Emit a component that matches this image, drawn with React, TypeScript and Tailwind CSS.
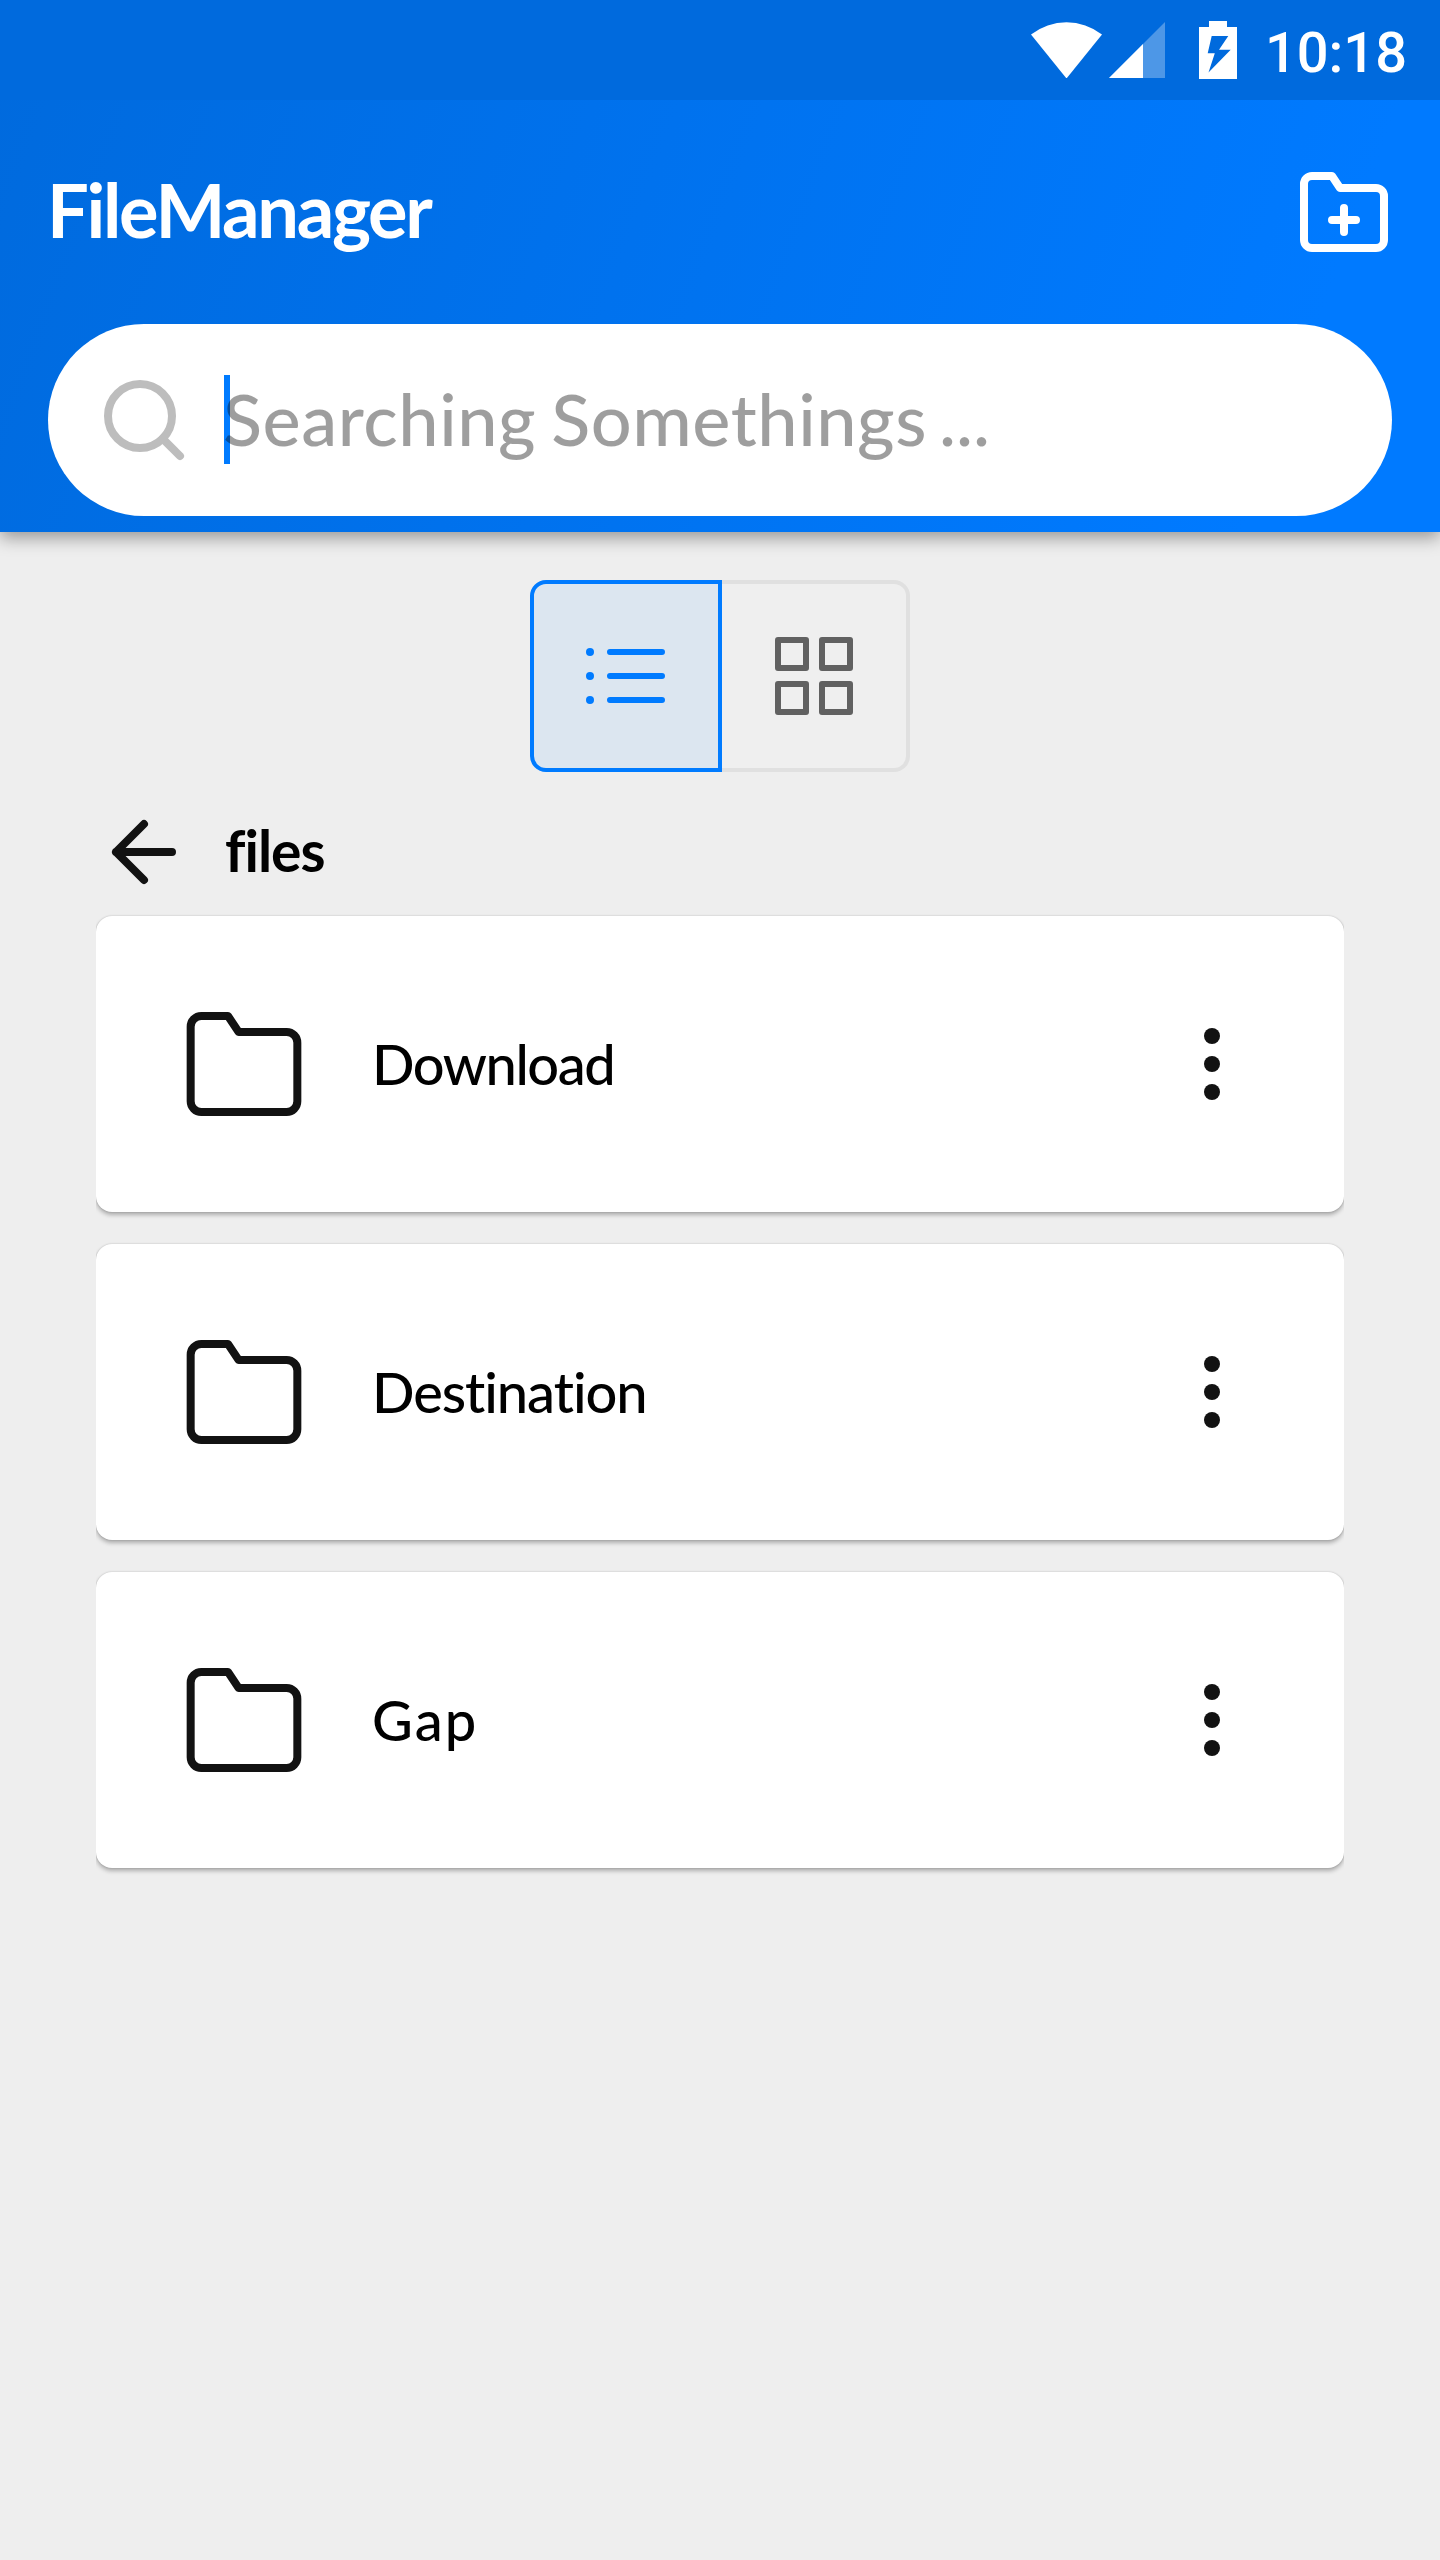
import type { ReactNode } from "react";

function Icon({ className, stroke = 2, children }: { className: string; stroke?: number; children: ReactNode }) {
  return (
    <svg
      viewBox="0 0 24 24"
      className={`shrink-0 ${className}`}
      fill="none"
      stroke="currentColor"
      strokeWidth={stroke}
      strokeLinecap="round"
      strokeLinejoin="round"
    >
      {children}
    </svg>
  );
}

const folderPath = "M22 19a2 2 0 0 1-2 2H4a2 2 0 0 1-2-2V5a2 2 0 0 1 2-2h5l2 3h9a2 2 0 0 1 2 2z";

function StatusBar() {
  return (
    <div className="flex h-[100px] items-start justify-end bg-[#006add] pr-[33px] text-white">
      <svg className="mt-[22px] h-14 w-[71px]" viewBox="0 0 71 56" fill="currentColor">
        <path d="M0 12.5A58 58 0 0 1 71 12.5L35.5 56.5z" />
      </svg>
      <svg className="mt-[22px] ml-[7px] h-14 w-14" viewBox="0 0 56 56" fill="currentColor">
        <path d="M56 0V56H0z" opacity="0.3" />
        <path d="M34 22V56H0z" />
      </svg>
      <svg className="mt-[21px] ml-[34px] h-[58px] w-[38px]" viewBox="0 0 38 58" fill="currentColor">
        <path
          fillRule="evenodd"
          d="M10 0H28V6H38V58H0V6H10zM12.7 15L8.7 32.3H15.8L9.5 51.5L31.7 28.7H20L29.3 15z"
        />
      </svg>
      <span className="mt-[3px] ml-7 font-[Roboto,sans-serif] text-[56px] leading-[100px] font-medium">10:18</span>
    </div>
  );
}

function Header() {
  return (
    <header className="relative h-[532px] bg-[linear-gradient(110deg,#006add_0%,#007aff_88%)] shadow-[0_6px_16px_rgba(0,0,0,0.36)]">
      <StatusBar />
      <div className="flex h-56 items-center justify-between pr-12 pl-[47px]">
        <h1 className="pb-[5px] text-[74px] leading-none font-bold tracking-[-2.3px] text-white">FileManager</h1>
        <Icon className="size-24 text-white">
          <path d={folderPath} />
          <path d="M12 11v6M9 14h6" />
        </Icon>
      </div>
      <div className="mx-12 flex h-48 items-center rounded-[96px] bg-white pl-12">
        <Icon className="size-24 text-[#bdbdbd]">
          <circle cx="11" cy="11" r="8" />
          <path d="M21 21l-4.35-4.35" />
        </Icon>
        <div className="mb-px ml-8 h-[89px] w-1.5 shrink-0 bg-[#007bff]" />
        <span className="-ml-[7px] pb-[5px] text-[72px] leading-none font-medium tracking-[0.55px] whitespace-nowrap text-black/38 [word-spacing:-3.7px]">
          Searching Somethings <span className="-ml-[3px] tracking-[0px]">...</span>
        </span>
      </div>
    </header>
  );
}

function ViewToggle() {
  return (
    <div className="mt-12 flex justify-center">
      <button className="flex size-48 items-center justify-center rounded-l-2xl border-4 border-[#007bff] bg-[#dce6f0] text-[#007bff]">
        <svg className="h-14 w-20" viewBox="0 0 80 56" fill="currentColor">
          <circle cx="4" cy="4" r="4" />
          <circle cx="4" cy="28" r="4" />
          <circle cx="4" cy="52" r="4" />
          <path d="M24 4H76M24 28H76M24 52H76" stroke="currentColor" strokeWidth="6" strokeLinecap="round" />
        </svg>
      </button>
      <button className="flex h-48 w-[188px] items-center justify-center rounded-r-2xl border-4 border-l-0 border-[#e0e0e0] bg-[#efefef] text-[#616161]">
        <svg
          className="size-[78px]"
          viewBox="0 0 78 78"
          fill="none"
          stroke="currentColor"
          strokeWidth="6"
          strokeLinejoin="round"
        >
          <path d="M3 3h28v28H3zM47 3h28v28H47zM3 47h28v28H3zM47 47h28v28H47z" />
        </svg>
      </button>
    </div>
  );
}

function FileCard({ name, tracking }: { name: string; tracking: string }) {
  return (
    <li className="[clip-path:inset(-12px_0)]">
      <div className="flex h-74 items-center rounded-2xl bg-white px-[84px] shadow-[0_3px_4px_rgba(0,0,0,0.27),0_0_2px_rgba(0,0,0,0.2)]">
        <Icon className="size-32 text-[#121212]" stroke={1.5}>
          <path d={folderPath} />
        </Icon>
        <span className={`ml-16 grow pb-px text-[56px] leading-none font-medium text-black ${tracking}`}>{name}</span>
        <svg className="size-24" viewBox="0 0 96 96" fill="#121212">
          <circle cx="48" cy="20" r="8" />
          <circle cx="48" cy="48" r="8" />
          <circle cx="48" cy="76" r="8" />
        </svg>
      </div>
    </li>
  );
}

export default function App() {
  return (
    <div className="h-[2560px] w-[1440px] overflow-hidden bg-[#eeeeee] font-[Lato,sans-serif]">
      <Header />
      <ViewToggle />
      <div className="mx-24 mt-8 flex h-24 items-center">
        <Icon className="size-24 text-[#121212]">
          <path d="M19 12H5M12 19l-7-7 7-7" />
        </Icon>
        <span className="ml-[33px] pb-[3px] text-[57px] leading-none font-bold tracking-[-1px] text-black">files</span>
      </div>
      <ul className="mx-24 mt-4 flex flex-col gap-8">
        <FileCard name="Download" tracking="tracking-[-1.45px]" />
        <FileCard name="Destination" tracking="tracking-[-1.05px]" />
        <FileCard name="Gap" tracking="tracking-[2px]" />
      </ul>
    </div>
  );
}
